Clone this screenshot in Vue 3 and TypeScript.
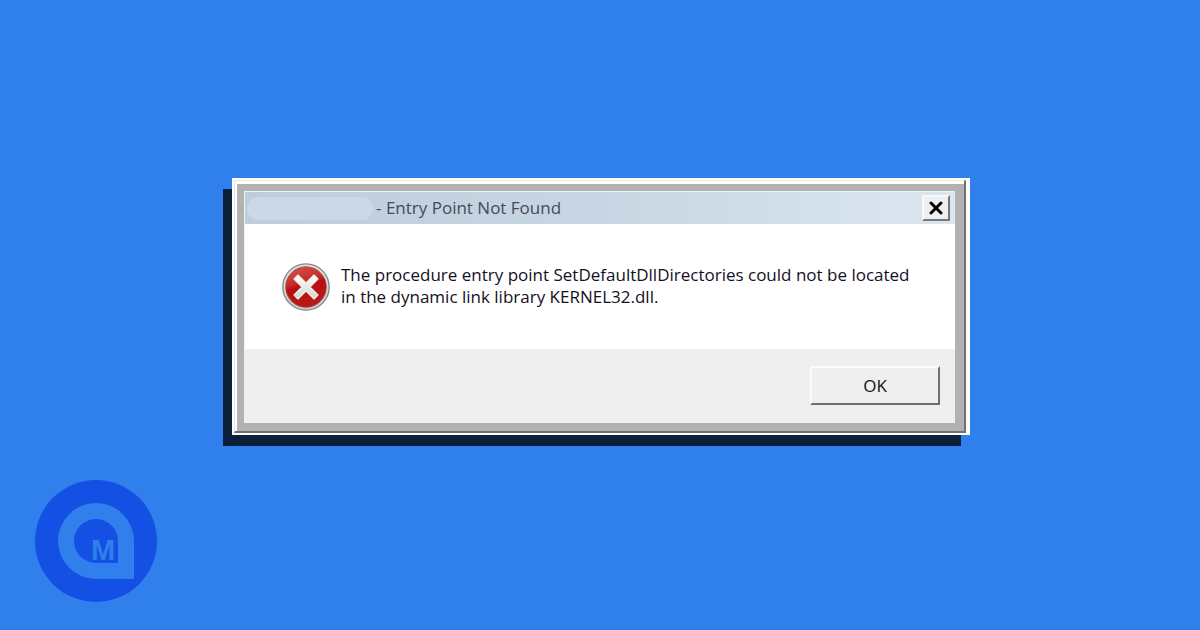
<script setup lang="ts">
import { ref } from 'vue'

const title = '- Entry Point Not Found'
const message =
  'The procedure entry point SetDefaultDllDirectories could not be located in the dynamic link library KERNEL32.dll.'
const open = ref<boolean>(true)

function dismiss(): void {
  open.value = false
}
</script>

<template>
  <main class="page">
    <section v-if="open" class="dialog" role="alertdialog" aria-labelledby="dialog-title" aria-describedby="dialog-message">
      <div class="bevel">
        <div class="panel">
          <header class="titlebar">
            <span class="redacted" aria-hidden="true"></span>
            <h1 id="dialog-title" class="title">{{ title }}</h1>
            <button class="close" type="button" aria-label="Close" @click="dismiss">
              <svg viewBox="0 0 14 14" width="14" height="14" aria-hidden="true">
                <path d="M2 2 L12 12 M12 2 L2 12" fill="none" stroke="#050505" stroke-width="3" stroke-linecap="round" />
              </svg>
            </button>
          </header>
          <div class="body">
            <svg class="error" viewBox="0 0 48 48" width="48" height="48" aria-hidden="true">
              <defs>
                <linearGradient id="rim" x1="0" y1="0" x2="0" y2="1">
                  <stop offset="0" stop-color="#e4e4e4" />
                  <stop offset="1" stop-color="#c6c9c9" />
                </linearGradient>
                <linearGradient id="red" x1="0" y1="0" x2="0.3" y2="1">
                  <stop offset="0" stop-color="#d9544f" />
                  <stop offset="0.45" stop-color="#c62c2a" />
                  <stop offset="0.55" stop-color="#b90e10" />
                  <stop offset="1" stop-color="#b51a19" />
                </linearGradient>
                <linearGradient id="cross" x1="0" y1="0" x2="0" y2="1">
                  <stop offset="0" stop-color="#ffffff" />
                  <stop offset="1" stop-color="#d4d5d1" />
                </linearGradient>
              </defs>
              <circle cx="24" cy="24" r="23.2" fill="url(#rim)" stroke="#858585" stroke-width="1.3" />
              <circle cx="24" cy="24" r="20.3" fill="url(#red)" stroke="#a04643" stroke-width="0.8" />
              <path
                d="M16 12 L24 20 L32 12 L36 16 L28 24 L36 32 L32 36 L24 28 L16 36 L12 32 L20 24 L12 16 Z"
                fill="url(#cross)" stroke="#eeeeea" stroke-width="1.2" stroke-linejoin="round"
              />
            </svg>
            <p id="dialog-message" class="message">{{ message }}</p>
          </div>
          <footer class="actions">
            <button class="ok" type="button" @click="dismiss">OK</button>
          </footer>
        </div>
      </div>
    </section>

    <svg class="logo" viewBox="0 0 122 122" width="122" height="122" role="img" aria-label="M">
      <circle cx="61" cy="61" r="61" fill="#1450e3" />
      <path d="M61 23 A38 38 0 0 1 99 61 V99 H61 A38 38 0 0 1 61 23 Z" fill="#2f80ed" />
      <path d="M61 39 A22 22 0 0 1 83 61 V83 H61 A22 22 0 0 1 61 39 Z" fill="#1450e3" />
      <text x="56" y="80" class="letter">M</text>
    </svg>
  </main>
</template>

<style>
body {
  background: #2f80ed;
}
</style>

<style scoped>
.page {
  position: relative;
  box-sizing: border-box;
  min-height: 100vh;
  padding: 0 0 17px 2px;
  display: flex;
  align-items: center;
  justify-content: center;
  background: #2f80ed;
  font-family: "Open Sans", "Noto Sans", sans-serif;
}

.dialog {
  box-sizing: border-box;
  width: 100%;
  max-width: 738px;
  padding: 2px 4px 2px 2px;
  background: #ffffff;
  box-shadow: -9px 11px 0 #0b2038;
}

.bevel {
  border-style: solid;
  border-width: 1px 2px 2px 1px;
  border-color: #e6e6e6 #707070 #707070 #e6e6e6;
  background: #b2b2b2;
  padding: 10px 9px 8px 9px;
  box-shadow: inset 2px 3px 0 #ffffff;
}

.panel {
  border: 1px solid #eef1f3;
  border-width: 1px 0 0 1px;
  background: #ffffff;
}

.titlebar {
  display: flex;
  align-items: center;
  height: 32px;
  padding: 0 5px 0 2px;
  background: linear-gradient(90deg, #bfcddb, #c8d6e3 50%, #dbe6f0);
}

.redacted {
  width: 126px;
  height: 23px;
  border-radius: 12px;
  background: #cad9e6;
}

.title {
  flex: 1;
  margin: 0 0 0 3px;
  font-size: 17px;
  font-weight: 400;
  line-height: 24px;
  color: #454a5e;
}

.close {
  box-sizing: border-box;
  display: flex;
  align-items: center;
  justify-content: center;
  width: 28px;
  height: 26px;
  padding: 0;
  border: 2px solid;
  border-color: #fafafa #777777 #777777 #fafafa;
  background: #efefef;
}

.body {
  display: flex;
  align-items: center;
  padding: 39px 40px 38px 37px;
}

.error {
  flex: none;
}

.message {
  flex: 1;
  margin: 0 0 0 11px;
  font-size: 17px;
  line-height: 22px;
  color: #14101e;
  align-self: flex-start;
  padding-top: 1px;
}

.actions {
  display: flex;
  justify-content: flex-end;
  padding: 17px 15px 18px;
  background: #efefef;
}

.ok {
  box-sizing: border-box;
  width: 130px;
  height: 39px;
  padding: 0;
  border: 2px solid;
  border-color: #fafafa #707070 #707070 #fafafa;
  background: #efefef;
  font-family: inherit;
  font-size: 17px;
  line-height: 22px;
  color: #14101e;
}

.logo {
  position: absolute;
  left: 35px;
  bottom: 28px;
}

.letter {
  font-family: "Liberation Sans", sans-serif;
  font-size: 29px;
  font-weight: 700;
  fill: #2f80ed;
}
</style>
